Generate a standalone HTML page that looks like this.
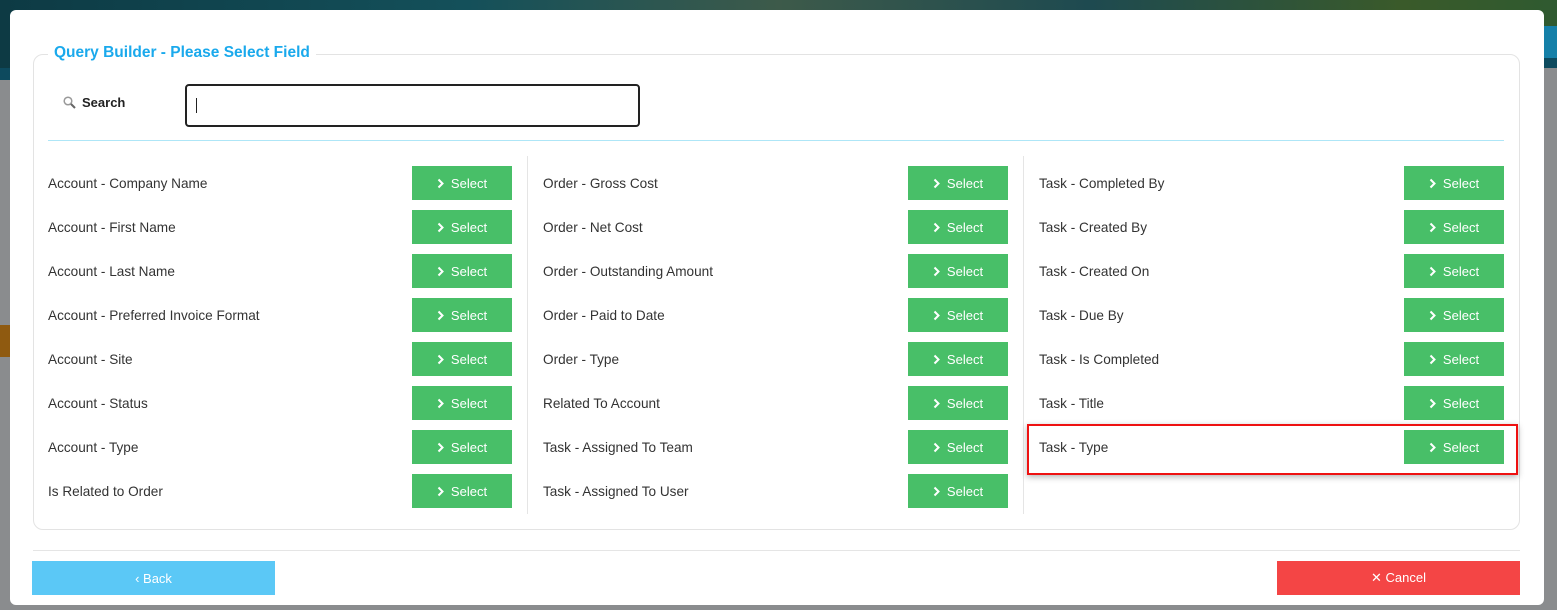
<!DOCTYPE html>
<html><head><style>
*{box-sizing:border-box;margin:0;padding:0}
body{width:1557px;height:610px;overflow:hidden;background:#8a8c8e;font-family:"Liberation Sans",sans-serif;position:relative}
.bgtop{position:absolute;left:0;top:0;width:1557px;height:68px;background:linear-gradient(90deg,#0d3a44,#14505a 30%,#3d5a4a 50%,#1e4a50 70%,#3a5a2a 90%,#2f5a30)}
.bgl1{position:absolute;left:0;top:68px;width:10px;height:12px;background:#0d4a5e}
.bgl2{position:absolute;left:0;top:325px;width:10px;height:32px;background:#8f5a10}
.bgr1{position:absolute;left:1544px;top:26px;width:13px;height:32px;background:#1580a8}
.bgr2{position:absolute;left:1544px;top:58px;width:13px;height:10px;background:#0d4a5e}
.modal{position:absolute;left:10px;top:10px;width:1534px;height:595px;background:#fff;border-radius:6px}
.fs{position:absolute;left:33px;top:54px;width:1487px;height:476px;border:1px solid #e3e3e3;border-radius:10px}
.legend{position:absolute;left:48px;top:44px;background:#fff;padding:0 6px;color:#1aa9ec;font-weight:bold;font-size:15.5px}
.slabel{position:absolute;left:63px;top:95px;font-size:13px;font-weight:bold;color:#222}
.input{position:absolute;left:185px;top:84px;width:455px;height:43px;border:2px solid #222;border-radius:4px}
.input:after{content:"";position:absolute;left:9px;top:12px;width:1px;height:15px;background:#222}
.div{position:absolute;left:48px;top:140px;width:1456px;height:1px;background:#aee6f7}
.vline{position:absolute;top:156px;width:1px;height:358px;background:#e5e5e5}
.lbl{position:absolute;font-size:13.6px;color:#333}
.btn{position:absolute;width:100px;height:34px;background:#48bf68;color:#fff;font-size:13px;display:flex;align-items:center;justify-content:center}
.btn svg{margin-right:7px}
.hl{position:absolute;left:1027px;top:424px;width:491px;height:51px;border:2px solid #ee1111;box-shadow:0 2px 6px rgba(0,0,0,.3)}
.fline{position:absolute;left:33px;top:550px;width:1487px;height:1px;background:#e5e5e5}
.back{position:absolute;left:32px;top:561px;width:243px;height:34px;background:#5bc8f6;color:#fff;font-size:13px;display:flex;align-items:center;justify-content:center}
.cancel{position:absolute;left:1277px;top:561px;width:243px;height:34px;background:#f44545;color:#fff;font-size:13px;display:flex;align-items:center;justify-content:center}
</style></head><body>
<div class="bgtop"></div><div class="bgl1"></div><div class="bgl2"></div><div class="bgr1"></div><div class="bgr2"></div>
<div class="modal"></div>
<div class="fs"></div>
<div class="legend">Query Builder - Please Select Field</div>
<svg style="position:absolute;left:63px;top:96px" width="13" height="13" viewBox="0 0 13 13"><circle cx="5" cy="5" r="3.8" fill="none" stroke="#999" stroke-width="1.5"/><path d="M8 8l4 4" stroke="#666" stroke-width="2"/></svg>
<div class="slabel" style="left:82px">Search</div>
<div class="input"></div>
<div class="div"></div>
<div class="vline" style="left:527px"></div>
<div class="vline" style="left:1023px"></div>
<div id="rows"></div>
<div class="hl"></div>
<div class="fline"></div>
<div class="back">‹ Back</div>
<div class="cancel">✕ Cancel</div>
<script>
var cols=[[48,412,["Account - Company Name","Account - First Name","Account - Last Name","Account - Preferred Invoice Format","Account - Site","Account - Status","Account - Type","Is Related to Order"]],
[543,908,["Order - Gross Cost","Order - Net Cost","Order - Outstanding Amount","Order - Paid to Date","Order - Type","Related To Account","Task - Assigned To Team","Task - Assigned To User"]],
[1039,1404,["Task - Completed By","Task - Created By","Task - Created On","Task - Due By","Task - Is Completed","Task - Title","Task - Type"]]];
var h="";cols.forEach(function(c){c[2].forEach(function(t,i){var y=166+i*44;
h+='<div class="lbl" style="left:'+c[0]+'px;top:'+(y+10)+'px">'+t+'</div><div class="btn" style="left:'+c[1]+'px;top:'+y+'px"><svg width="7" height="11" viewBox="0 0 7 11"><path d="M1.5 1.5l4 4-4 4" fill="none" stroke="#fff" stroke-width="2"/></svg>Select</div>';});});
document.getElementById("rows").innerHTML=h;
</script>
</body></html>
